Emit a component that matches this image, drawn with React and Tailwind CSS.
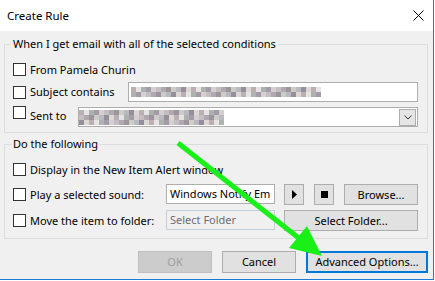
import React from "react";

const PALETTE = ["#d6cfd2", "#c4bdc2", "#b0a9b0", "#9e949c", "#cbcdc6", "#b8b9c1", "#958f9b", "#ddd8d4", "#bcafb2", "#e6e3e5", "#aeb2af", "#a39ca8"];

function Mosaic({ cols, rows, seed }) {
  const cells = [];
  let s = seed;
  for (let r = 0; r < rows; r++) {
    for (let c = 0; c < cols; c++) {
      s = (s * 9301 + 49297) % 233280;
      cells.push(PALETTE[s % PALETTE.length]);
    }
  }
  return (
    <div
      className="grid"
      style={{ gridTemplateColumns: `repeat(${cols}, 5px)`, gridAutoRows: "5px" }}
    >
      {cells.map((c, i) => (
        <div key={i} style={{ background: c }} />
      ))}
    </div>
  );
}

function Check() {
  return <div className="w-[13px] h-[13px] shrink-0 bg-white border border-[#333333]" />;
}

function Btn({ children, className = "" }) {
  return (
    <div
      className={`h-[21px] shrink-0 flex items-center justify-center bg-[#e1e1e1] border border-[#adadad] ${className}`}
    >
      {children}
    </div>
  );
}

export default function App() {
  return (
    <div className="w-[435px] h-[281px] bg-white relative overflow-hidden text-[11px] leading-[16px] text-black font-['Segoe_UI','Noto_Sans',sans-serif]">
      <div className="w-[434px] h-[280px] border-r border-b border-[#1c7cd5] flex flex-col">
        {/* title bar */}
        <div className="h-[31px] shrink-0 bg-white flex items-center justify-between pl-[7px] pr-[9px]">
          <span className="text-[11.5px]">Create Rule</span>
          <svg width="11" height="11" viewBox="0 0 11 11">
            <path d="M0.5 0.5 L10.5 10.5 M10.5 0.5 L0.5 10.5" stroke="#000" strokeWidth="1" />
          </svg>
        </div>

        <div className="flex-1 bg-[#f0f0f0] pl-[4px] pr-[5px] flex flex-col">
          {/* conditions */}
          <fieldset className="mt-[5px] border border-[#dcdcdc] pl-[8px] pr-[9px] pb-[5px]">
            <legend className="-ml-[2px] px-[2px] leading-[16px]">
              When I get email with all of the selected conditions
            </legend>
            <div className="mt-[11px] h-[13px] flex items-center gap-[4px]">
              <Check />
              <span>From Pamela Churin</span>
            </div>
            <div className="mt-[6px] h-[20px] flex items-center">
              <div className="w-[115px] flex items-center gap-[4px]">
                <Check />
                <span>Subject contains</span>
              </div>
              <div className="flex-1 h-[20px] bg-white border border-[#adadad] flex items-center pl-[2px]">
                <Mosaic cols={38} rows={2} seed={7} />
              </div>
            </div>
            <div className="mt-[5px] h-[20px] flex items-start">
              <div className="w-[65px] flex items-start gap-[4px] -mt-[1px]">
                <Check />
                <span className="mt-[2px]">Sent to</span>
              </div>
              <div className="flex-1 h-[20px] bg-white border border-[#adadad] flex items-center">
                <div className="flex-1">
                  <Mosaic cols={29} rows={3} seed={31} />
                </div>
                <div className="w-[17px] h-[17px] mr-px bg-[#e5e5e5] border border-[#adadad] flex items-center justify-center">
                  <svg width="8" height="5" viewBox="0 0 8 5">
                    <path d="M0.5 0.5 L4 4 L7.5 0.5" fill="none" stroke="#333" strokeWidth="1" />
                  </svg>
                </div>
              </div>
            </div>
          </fieldset>

          {/* actions */}
          <fieldset className="mt-[3px] border border-[#dcdcdc] pl-[8px] pr-[9px] pb-[7px]">
            <legend className="-ml-[2px] px-[2px] leading-[16px]">Do the following</legend>
            <div className="mt-[11px] h-[13px] flex items-center gap-[4px]">
              <Check />
              <span>Display in the New Item Alert window</span>
            </div>
            <div className="mt-[8px] h-[21px] flex items-center">
              <div className="w-[153px] flex items-center gap-[4px]">
                <Check />
                <span>Play a selected sound:</span>
              </div>
              <div className="w-[109px] h-[20px] self-start bg-white border border-[#adadad] pl-[3px] flex items-center overflow-hidden whitespace-nowrap">
                Windows Notify Em
              </div>
              <Btn className="w-[20px] ml-[9px]">
                <svg width="5" height="9" viewBox="0 0 5 9">
                  <path d="M0 0 L5 4.5 L0 9 Z" fill="#000" />
                </svg>
              </Btn>
              <Btn className="w-[20px] ml-[10px]">
                <div className="w-[7px] h-[7px] bg-black" />
              </Btn>
              <Btn className="w-[74px] ml-[10px]">Browse...</Btn>
            </div>
            <div className="mt-[5px] h-[21px] flex items-center">
              <div className="w-[153px] flex items-center gap-[4px]">
                <Check />
                <span>Move the item to folder:</span>
              </div>
              <div className="w-[109px] h-[20px] self-start border border-[#c3cfdb] pl-[3px] flex items-center text-[#6d6d6d] whitespace-nowrap">
                Select Folder
              </div>
              <Btn className="w-[134px] ml-[9px]">Select Folder...</Btn>
            </div>
          </fieldset>

          {/* footer */}
          <div className="mt-[12px] flex justify-end gap-[10px]">
            <div className="w-[74px] h-[22px] flex items-center justify-center bg-[#cccccc] border border-[#bfbfbf] text-[#a0a0a0]">
              OK
            </div>
            <div className="w-[74px] h-[22px] flex items-center justify-center bg-[#e1e1e1] border border-[#adadad]">
              Cancel
            </div>
            <div className="w-[122px] h-[22px] flex items-center justify-center bg-[#e1e1e1] border-2 border-[#0078d7]">
              Advanced Options...
            </div>
          </div>
        </div>
      </div>

      {/* annotation arrow */}
      <svg className="absolute left-0 top-0 pointer-events-none" width="435" height="281" viewBox="0 0 435 281">
        <line x1="178" y1="143" x2="300" y2="239" stroke="#18f018" strokeWidth="5" />
        <path d="M322 256 L289 248 L307 226 Z" fill="#18f018" />
      </svg>
    </div>
  );
}
